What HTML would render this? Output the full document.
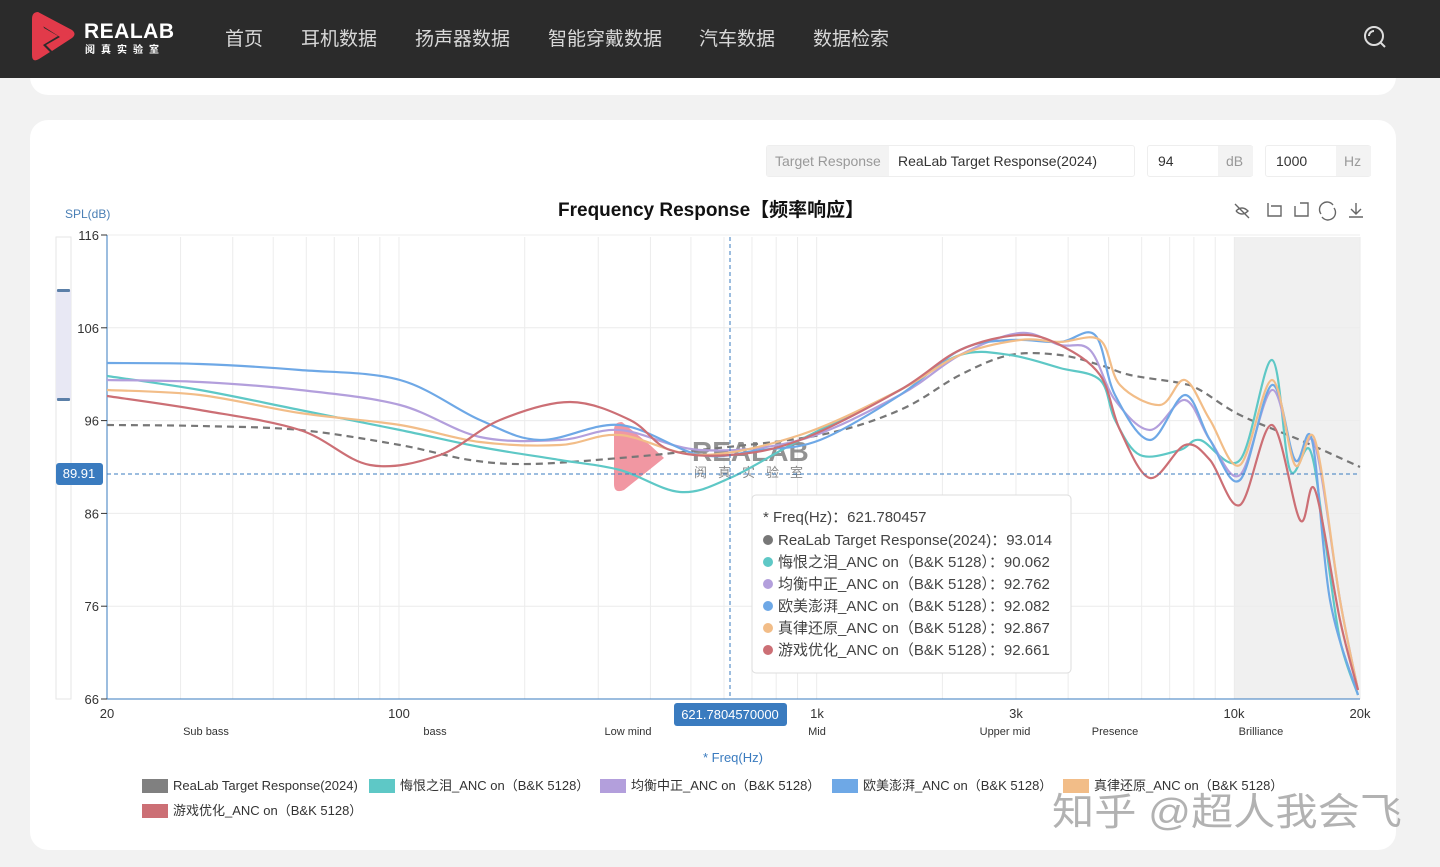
<!DOCTYPE html>
<html><head><meta charset="utf-8"><style>
*{margin:0;padding:0;box-sizing:border-box}
body{width:1440px;height:867px;overflow:hidden;background:#f2f2f2;font-family:"Liberation Sans","Noto Sans CJK SC",sans-serif;position:relative}
.nav{position:absolute;left:0;top:0;width:1440px;height:78px;background:#2b2b2b;z-index:5}
.nav .m{position:absolute;top:24px;color:#d8d8d8;font-size:19px}
.card1{position:absolute;left:30px;top:40px;width:1366px;height:55px;background:#fff;border-radius:18px}
.card2{position:absolute;left:30px;top:120px;width:1366px;height:730px;background:#fff;border-radius:18px}
.inp{position:absolute;top:145px;height:32px;border:1px solid #eee;border-radius:3px;font-size:14px;color:#333;line-height:30px}
.inp .a{position:absolute;top:0;height:30px;background:#f3f3f3;color:#999;padding:0 8px}
</style></head><body>
<div class="card1"></div>
<div class="nav">
<svg style="position:absolute;left:30px;top:11px" width="48" height="52" viewBox="0 0 48 52"><path d="M8 1 Q2 1 2 8 L2 44 Q2 52 9 48 L20 41 L13 34 L28 25 L14 17 Z" fill="#e23a4a"/><path d="M8 1 L42 19 Q47 23 42 27 L22 40 L16 34 L30 26 L8 12 Z" fill="#e23a4a"/></svg>
<div style="position:absolute;left:84px;top:20px;color:#fff;font-weight:bold;font-size:21px;letter-spacing:0.5px">REALAB</div>
<div style="position:absolute;left:85px;top:41px;color:#fff;font-size:10px;letter-spacing:6px;font-weight:bold">阅真实验室</div>
<span class="m" style="left:225px">首页</span><span class="m" style="left:301px">耳机数据</span><span class="m" style="left:415px">扬声器数据</span><span class="m" style="left:548px">智能穿戴数据</span><span class="m" style="left:699px">汽车数据</span><span class="m" style="left:813px">数据检索</span>
<svg style="position:absolute;left:1363px;top:25px" width="24" height="24"><circle cx="11" cy="11" r="9" fill="none" stroke="#ddd" stroke-width="2"/><path d="M17.5 17.5L22 22M6 11a5 5 0 0 1 5-5" stroke="#ddd" stroke-width="2" fill="none"/></svg>
</div>
<div class="card2"></div>
<div class="inp" style="left:766px;width:369px"><span class="a" style="left:0">Target Response</span><span style="position:absolute;left:131px">ReaLab Target Response(2024)</span></div>
<div class="inp" style="left:1147px;width:106px"><span style="position:absolute;left:10px">94</span><span class="a" style="left:70px;width:35px">dB</span></div>
<div class="inp" style="left:1265px;width:106px"><span style="position:absolute;left:10px">1000</span><span class="a" style="left:70px;width:35px">Hz</span></div>
<div style="position:absolute;left:558px;top:195px;font-size:19px;font-weight:bold;color:#111">Frequency Response【频率响应】</div>
<div style="position:absolute;left:65px;top:207px;font-size:12px;color:#4a7fb5">SPL(dB)</div>
<svg style="position:absolute;left:0;top:0" width="1440" height="867" id="s">
<g stroke="#666" fill="none" stroke-width="1.4"><path d="M1235 204l14 14M1236 211q6-6 12 0q-6 6-12 0"/><path d="M1268 203v13h13v-10h-10"/><path d="M1295 206v10h13v-13h-8"/><path d="M1321 214a7 7 0 0 1 12-9M1334 208a7 7 0 0 1-12 9"/><path d="M1356 203v11M1351 209l5 5l5-5M1349 217h14"/></g>
<rect x="1234" y="237" width="126" height="462" fill="#f0f0f0"/>
<rect x="56" y="237" width="15" height="462" fill="none" stroke="#e6e6e6"/>
<rect x="56" y="290" width="15" height="110" fill="#e8e8f4"/>
<rect x="57" y="289" width="13" height="3" rx="1" fill="#5b7fa8"/><rect x="57" y="398" width="13" height="3" rx="1" fill="#5b7fa8"/>
<g id="grid" stroke="#ececec" stroke-width="1"></g>
<line x1="107" y1="235" x2="107" y2="699" stroke="#3a7bbf"/>
<line x1="107" y1="699" x2="1360" y2="699" stroke="#3a7bbf"/>
<g font-size="13" fill="#333" text-anchor="end" id="yl"></g>
<g font-size="13" fill="#333" text-anchor="middle"><text x="107" y="718">20</text><text x="399" y="718">100</text><text x="817" y="718">1k</text><text x="1016" y="718">3k</text><text x="1234" y="718">10k</text><text x="1360" y="718">20k</text></g>
<g font-size="11" fill="#333" text-anchor="middle"><text x="206" y="735">Sub bass</text><text x="435" y="735">bass</text><text x="628" y="735">Low mind</text><text x="817" y="735">Mid</text><text x="1005" y="735">Upper mid</text><text x="1115" y="735">Presence</text><text x="1261" y="735">Brilliance</text></g>
<text x="733" y="762" font-size="13" fill="#3a7bbf" text-anchor="middle">* Freq(Hz)</text>
<path d="M622 422 Q614 422 614 430 L614 484 Q614 494 624 490 L664 458 L650 445 Z" fill="#f08c98" opacity="0.9"/>
<text x="692" y="461" font-size="28" fill="#777" opacity="0.8" font-weight="bold">REALAB</text>
<text x="694" y="477" font-size="13" fill="#888" letter-spacing="11">阅真实验室</text>
<g id="curves" fill="none" stroke-width="2.2"></g>
<line x1="730" y1="237" x2="730" y2="699" stroke="#3a7bbf" stroke-dasharray="4 3"/>
<line x1="107" y1="474" x2="1360" y2="474" stroke="#3a7bbf" stroke-dasharray="4 3"/>
<rect x="56" y="463" width="47" height="22" rx="3" fill="#3a7bbf"/><text x="79" y="478" font-size="13" fill="#fff" text-anchor="middle">89.91</text>
<rect x="674" y="703" width="113" height="23" rx="3" fill="#3a7bbf"/><text x="730" y="719" font-size="13" fill="#fff" text-anchor="middle">621.7804570000</text>
<rect x="752" y="495" width="319" height="178" rx="4" fill="#fff" stroke="#ddd"/>
<g font-size="15" fill="#444"><text x="763" y="522">* Freq(Hz)：621.780457</text>
<circle cx="768" cy="540" r="5" fill="#777"/><text x="778" y="545">ReaLab Target Response(2024)：93.014</text>
<circle cx="768" cy="562" r="5" fill="#5ec8c6"/><text x="778" y="567">悔恨之泪_ANC on（B&amp;K 5128）：90.062</text>
<circle cx="768" cy="584" r="5" fill="#b39fdc"/><text x="778" y="589">均衡中正_ANC on（B&amp;K 5128）：92.762</text>
<circle cx="768" cy="606" r="5" fill="#6ea8e6"/><text x="778" y="611">欧美澎湃_ANC on（B&amp;K 5128）：92.082</text>
<circle cx="768" cy="628" r="5" fill="#f2bd88"/><text x="778" y="633">真律还原_ANC on（B&amp;K 5128）：92.867</text>
<circle cx="768" cy="650" r="5" fill="#cc6f75"/><text x="778" y="655">游戏优化_ANC on（B&amp;K 5128）：92.661</text></g>
<g font-size="13" fill="#333"><rect x="142" y="779" width="26" height="14" fill="#808080"/><text x="173" y="790">ReaLab Target Response(2024)</text>
<rect x="369" y="779" width="26" height="14" fill="#5ec8c6"/><text x="400" y="790">悔恨之泪_ANC on（B&amp;K 5128）</text>
<rect x="600" y="779" width="26" height="14" fill="#b39fdc"/><text x="631" y="790">均衡中正_ANC on（B&amp;K 5128）</text>
<rect x="832" y="779" width="26" height="14" fill="#6ea8e6"/><text x="863" y="790">欧美澎湃_ANC on（B&amp;K 5128）</text>
<rect x="1063" y="779" width="26" height="14" fill="#f2bd88"/><text x="1094" y="790">真律还原_ANC on（B&amp;K 5128）</text>
<rect x="142" y="804" width="26" height="14" fill="#cc6f75"/><text x="173" y="815">游戏优化_ANC on（B&amp;K 5128）</text></g>
<text x="1052" y="825" font-size="38" fill="#999" opacity="0.75" textLength="350" lengthAdjust="spacingAndGlyphs">知乎 @超人我会飞</text>
</svg>
<script>
var NS="http://www.w3.org/2000/svg";
function el(p,t,a,txt){var e=document.createElementNS(NS,t);for(var k in a)e.setAttribute(k,a[k]);if(txt)e.textContent=txt;p.appendChild(e);return e}
var g=document.getElementById('grid');
var X=function(f){return 107+Math.log10(f/20)*417.7};
[30,40,50,60,70,80,90,100,200,300,400,500,600,700,800,900,1000,2000,3000,4000,5000,6000,7000,8000,9000,10000,20000].forEach(function(f){var x=X(f);el(g,'line',{x1:x,y1:237,x2:x,y2:699})});
var yl=document.getElementById('yl');
[116,106,96,86,76,66].forEach(function(v){var y=235+(116-v)*9.28;el(g,'line',{x1:107,y1:y,x2:1360,y2:y});el(yl,'text',{x:99,y:y+5},String(v));el(document.getElementById('s'),'line',{x1:101,y1:y,x2:107,y2:y,stroke:'#333'})});
function path(p){var d='M'+p[0][0]+' '+p[0][1];for(var i=0;i<p.length-1;i++){var p0=p[i-1]||p[i],p1=p[i],p2=p[i+1],p3=p[i+2]||p2;d+='C'+(p1[0]+(p2[0]-p0[0])/6)+' '+(p1[1]+(p2[1]-p0[1])/6)+' '+(p2[0]-(p3[0]-p1[0])/6)+' '+(p2[1]-(p3[1]-p1[1])/6)+' '+p2[0]+' '+p2[1]}return d}
var C=[
['#5ec8c6',[[107,376],[200,390],[300,410],[400,430],[480,447],[560,460],[620,470],[680,492],[730,478],[800,440],[900,390],[960,355],[1010,355],[1060,368],[1100,380],[1115,420],[1140,455],[1180,450],[1200,440],[1240,460],[1272,360],[1290,470],[1310,450],[1325,540],[1340,640],[1358,695]]],
['#b39fdc',[[107,380],[200,382],[300,390],[400,405],[480,437],[560,440],[620,430],[700,450],[800,440],[900,395],[960,355],[1020,333],[1060,345],[1090,350],[1115,400],[1150,430],[1185,400],[1210,440],[1240,475],[1272,390],[1295,460],[1315,445],[1340,600],[1358,690]]],
['#6ea8e6',[[107,363],[200,364],[300,370],[400,380],[480,420],[540,440],[620,425],[700,455],[760,450],[820,440],[900,395],[960,350],[1010,340],[1060,342],[1095,335],[1115,395],[1150,440],[1185,395],[1210,440],[1240,480],[1272,385],[1295,460],[1312,440],[1330,600],[1358,695]]],
['#f2bd88',[[107,390],[200,395],[300,413],[400,425],[480,442],[560,445],[620,435],[700,455],[800,435],[900,390],[960,355],[1020,340],[1060,342],[1100,340],[1120,385],[1160,405],[1185,380],[1210,420],[1240,465],[1272,380],[1295,465],[1315,440],[1340,600],[1358,690]]],
['#cc6f75',[[107,396],[200,410],[300,430],[370,465],[440,455],[500,420],[570,402],[630,420],[670,450],[730,455],[800,440],[900,390],[960,350],[1020,335],[1060,345],[1100,375],[1120,430],[1150,478],[1185,445],[1210,460],[1240,505],[1272,425],[1300,520],[1315,490],[1340,620],[1358,690]]]];
var cg=document.getElementById('curves');
el(cg,'path',{d:path([[107,425],[200,426],[300,430],[400,445],[470,460],[530,464],[620,458],[700,450],[820,435],[900,410],[960,375],[1010,355],[1060,355],[1100,365],[1130,375],[1180,383],[1200,390],[1240,415],[1300,440],[1360,467]]),stroke:'#777','stroke-dasharray':'7 5'});
C.forEach(function(c){el(cg,'path',{d:path(c[1]),stroke:c[0]})});
</script>
</body></html>
